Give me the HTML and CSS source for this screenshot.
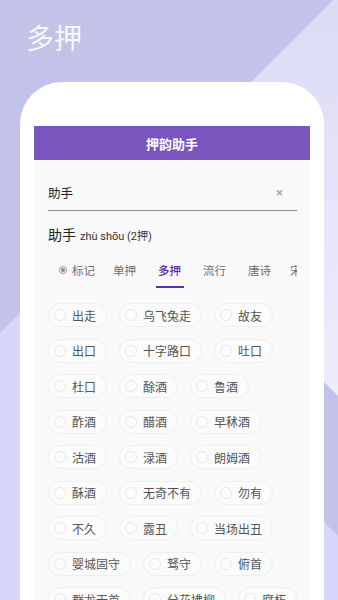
FILE: index.html
```html
<!DOCTYPE html>
<html lang="zh-CN">
<head>
<meta charset="utf-8">
<title>多押</title>
<link rel="stylesheet" href="styles.css">
</head>
<body>
<svg class="bg" width="338" height="600" viewBox="0 0 338 600" aria-hidden="true">
  <defs>
    <linearGradient id="lt" x1="0" y1="0" x2="0" y2="1">
      <stop offset="0" stop-color="#dcdbf6"/>
      <stop offset="1" stop-color="#eeedfc"/>
    </linearGradient>
  </defs>
  <rect x="0" y="0" width="338" height="600" fill="#d8d6fb"/>
  <polygon points="333,0 338,0 338,396 137.5,195.5" fill="url(#lt)"/>
  <polygon points="0,0 333,0 137.5,195.5 338,396 338,536 67.5,265.5 0,333" fill="#c3c2e8"/>
</svg>
<div class="page">
  <h1 class="title">多押</h1>
  <div class="card">
    <div class="appbar">押韵助手</div>
    <div class="panel">
      <div class="search">
        <span class="query">助手</span>
        <span class="clear">×</span>
      </div>
      <div class="word"><span class="hanzi">助手</span> <span class="pinyin">zhù shōu (2押)</span></div>
      <div class="tabs">
        <div class="tab tab-mark"><span class="radio-dot"></span>标记</div>
        <div class="tab">单押</div>
        <div class="tab active">多押</div>
        <div class="tab">流行</div>
        <div class="tab">唐诗</div>
        <div class="tab tab-last">宋词</div>
      </div>
      <div class="chips">
        <div class="chip"><span class="circle"></span>出走</div>
        <div class="chip"><span class="circle"></span>乌飞兔走</div>
        <div class="chip"><span class="circle"></span>故友</div>
        <div class="chip"><span class="circle"></span>出口</div>
        <div class="chip"><span class="circle"></span>十字路口</div>
        <div class="chip"><span class="circle"></span>吐口</div>
        <div class="chip"><span class="circle"></span>杜口</div>
        <div class="chip"><span class="circle"></span>酴酒</div>
        <div class="chip"><span class="circle"></span>鲁酒</div>
        <div class="chip"><span class="circle"></span>酢酒</div>
        <div class="chip"><span class="circle"></span>醋酒</div>
        <div class="chip"><span class="circle"></span>早秫酒</div>
        <div class="chip"><span class="circle"></span>沽酒</div>
        <div class="chip"><span class="circle"></span>渌酒</div>
        <div class="chip"><span class="circle"></span>朗姆酒</div>
        <div class="chip"><span class="circle"></span>酥酒</div>
        <div class="chip"><span class="circle"></span>无奇不有</div>
        <div class="chip"><span class="circle"></span>勿有</div>
        <div class="chip"><span class="circle"></span>不久</div>
        <div class="chip"><span class="circle"></span>露丑</div>
        <div class="chip"><span class="circle"></span>当场出丑</div>
        <div class="chip"><span class="circle"></span>婴城固守</div>
        <div class="chip"><span class="circle"></span>驽守</div>
        <div class="chip"><span class="circle"></span>俯首</div>
        <div class="chip"><span class="circle"></span>群龙无首</div>
        <div class="chip"><span class="circle"></span>分花拂柳</div>
        <div class="chip"><span class="circle"></span>腐朽</div>
      </div>
    </div>
  </div>
</div>
</body>
</html>
```
FILE: styles.css
```css
html, body {
  margin: 0;
  padding: 0;
}
body {
  width: 338px;
  height: 600px;
  overflow: hidden;
  position: relative;
  font-family: Roboto, "Noto Sans CJK SC", sans-serif;
  color: #333;
}
.bg {
  position: absolute;
  left: 0;
  top: 0;
  z-index: 0;
}
.page {
  position: relative;
  z-index: 1;
  display: flex;
  flex-direction: column;
  height: 600px;
}
.title {
  margin: 0;
  padding: 24px 0 0 26px;
  height: 82px;
  flex-shrink: 0;
  box-sizing: border-box;
  font-size: 28px;
  line-height: 32px;
  font-weight: 400;
  color: #f7f7fd;
}
.card {
  margin-left: 20px;
  width: 304px;
  flex: 1;
  background: #ffffff;
  border-radius: 42px 42px 0 0;
  padding: 44px 14px 0;
  box-sizing: border-box;
  display: flex;
  flex-direction: column;
  min-height: 0;
}
.appbar {
  height: 34px;
  background: #7b55be;
  color: #ffffff;
  font-size: 13px;
  font-weight: 700;
  display: flex;
  align-items: center;
  justify-content: center;
  flex-shrink: 0;
}
.panel {
  flex: 1;
  background: #f9f9f9;
  padding: 0 13px 0 14px;
  min-height: 0;
  overflow: hidden;
}
.search {
  margin-top: 20px;
  height: 31px;
  box-sizing: border-box;
  padding-bottom: 6px;
  border-bottom: 1px solid #8c8c8c;
  display: flex;
  align-items: center;
  justify-content: space-between;
}
.query {
  font-size: 12.5px;
  color: #222;
}
.clear {
  font-size: 13px;
  color: #9a9a9a;
  margin-right: 14px;
}
.word {
  margin-top: 14px;
  height: 20px;
  line-height: 20px;
  white-space: nowrap;
}
.hanzi {
  font-size: 14px;
  color: #222;
}
.pinyin {
  font-size: 11px;
  color: #333;
}
.tabs {
  margin-top: 6px;
  height: 37px;
  display: flex;
  overflow: hidden;
}
.tab {
  position: relative;
  flex-shrink: 0;
  padding: 0 11px;
  display: flex;
  align-items: center;
  font-size: 11.5px;
  color: #6e6e6e;
  white-space: nowrap;
}
.tab-mark {
  padding-right: 7px;
  gap: 5px;
}
.tab-last {
  padding-left: 8px;
}
.radio-dot {
  width: 8px;
  height: 8px;
  box-sizing: border-box;
  border: 1px solid #9a9a9a;
  border-radius: 50%;
  display: flex;
  align-items: center;
  justify-content: center;
}
.radio-dot::before {
  content: "";
  width: 4px;
  height: 4px;
  border-radius: 50%;
  background: #8a8a8a;
}
.tab.active {
  color: #5a2ea6;
  font-weight: 500;
}
.tab.active::after {
  content: "";
  position: absolute;
  left: 50%;
  bottom: 0;
  width: 28px;
  height: 2px;
  margin-left: -14px;
  background: #5b2fa8;
}
.chips {
  margin-top: 15px;
  margin-right: -6px;
  display: flex;
  flex-wrap: wrap;
  gap: 11.5px 12px;
}
.chip {
  height: 24px;
  box-sizing: border-box;
  border: 1px solid #efefef;
  border-radius: 12px;
  background: #fbfbfb;
  padding: 0 10px 0 5px;
  display: flex;
  align-items: center;
  gap: 6px;
  font-size: 12px;
  color: #555555;
  white-space: nowrap;
}
.circle {
  width: 12px;
  height: 12px;
  box-sizing: border-box;
  border: 1px solid #e8e8e8;
  border-radius: 50%;
  background: #fcfcfc;
  flex-shrink: 0;
}
```
